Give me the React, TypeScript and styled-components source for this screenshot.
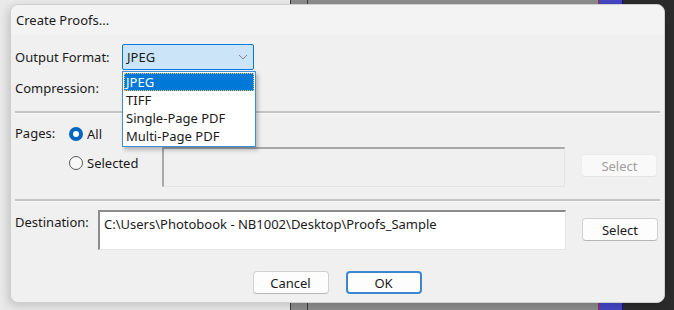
import React from 'react';
import styled, { createGlobalStyle } from 'styled-components';

const GlobalStyle = createGlobalStyle`
  html, body {
    margin: 0;
    padding: 0;
  }
  body {
    font-family: 'Noto Sans', 'Open Sans', sans-serif;
    font-size: 13px;
    color: #1a1a1a;
  }
`;

const Desktop = styled.div`
  width: 674px;
  height: 310px;
  box-sizing: border-box;
  padding: 4px 9px 7px 10px;
  overflow: hidden;
  background: linear-gradient(
    to right,
    #e9e9e9 0,
    #e9e9e9 290px,
    #3a3a3a 290px,
    #3a3a3a 291px,
    #8d8d8d 291px,
    #8d8d8d 307px,
    #3a3a3a 307px,
    #3a3a3a 308px,
    #8d8d8d 308px,
    #8d8d8d 598px,
    #c02020 598px,
    #c02020 599px,
    #4646c4 599px,
    #4646c4 622px,
    #1010a0 622px,
    #1010a0 623px,
    #2b2b2b 623px
  );
`;

const Dialog = styled.div`
  height: 100%;
  box-sizing: border-box;
  background: #f0f0f0;
  border: 1px solid #cfcfcf;
  border-radius: 8px;
  box-shadow: -2px 3px 8px rgba(0, 0, 0, 0.16);
  display: flex;
  flex-direction: column;
`;

const TitleBar = styled.div`
  height: 30px;
  padding: 0 5px;
  display: flex;
  align-items: center;
  background: #f3f3f3;
  border-radius: 8px 8px 0 0;
`;

const Body = styled.div`
  flex: 1;
  padding: 9px 6px 0 4px;
  display: flex;
  flex-direction: column;
`;

const Row = styled.div<{ $top?: number; $height?: number }>`
  display: flex;
  align-items: flex-start;
  margin-top: ${(p) => p.$top ?? 0}px;
  ${(p) => (p.$height ? `height: ${p.$height}px; align-items: center;` : '')}
`;

const Label = styled.div<{ $width?: number; $top?: number }>`
  width: ${(p) => (p.$width ? `${p.$width}px` : 'auto')};
  margin-top: ${(p) => p.$top ?? 0}px;
  flex-shrink: 0;
`;

const SelectWrap = styled.div`
  position: relative;
`;

const SelectBox = styled.div`
  width: 132px;
  height: 26px;
  box-sizing: border-box;
  border: 1px solid #0078d7;
  border-radius: 2px;
  background: #cce4f7;
  display: flex;
  align-items: center;
  justify-content: space-between;
  padding: 0 5px 0 4px;
`;

const DropList = styled.div`
  position: absolute;
  top: 27px;
  left: 0;
  width: 134px;
  box-sizing: border-box;
  background: #fff;
  border: 1px solid #3c8fd8;
  box-shadow: 2px 3px 4px rgba(0, 0, 0, 0.25);
  padding: 1px;
  z-index: 5;
`;

const DropItem = styled.div<{ $active?: boolean }>`
  height: 18px;
  line-height: 18px;
  padding: 0 2px;
  box-sizing: border-box;
  background: ${(p) => (p.$active ? '#0078d7' : 'transparent')};
  color: ${(p) => (p.$active ? '#fff' : '#1a1a1a')};
  outline: ${(p) => (p.$active ? '1px dotted #e8c070' : 'none')};
  outline-offset: -1px;
`;

const Separator = styled.div<{ $top: number }>`
  height: 2px;
  margin-top: ${(p) => p.$top}px;
  margin-right: -2px;
  background: #c4c4c4;
  border-bottom: 1px solid #f8f8f8;
`;

const RadioGroup = styled.div`
  display: flex;
  flex-direction: column;
  gap: 7px;
`;

const RadioRow = styled.label`
  display: flex;
  align-items: center;
  gap: 4px;
  height: 22px;
`;

const RadioDot = styled.span<{ $checked?: boolean }>`
  width: 14px;
  height: 14px;
  box-sizing: border-box;
  border-radius: 50%;
  border: ${(p) => (p.$checked ? '4px solid #0067c0' : '1px solid #5a5a5a')};
  background: ${(p) => (p.$checked ? '#fff' : '#f7f7f7')};
`;

const TextArea = styled.div<{ $disabled?: boolean; $width: number; $left?: number; $top?: number }>`
  width: ${(p) => p.$width}px;
  height: 40px;
  margin-left: ${(p) => p.$left ?? 0}px;
  margin-top: ${(p) => p.$top ?? 0}px;
  box-sizing: border-box;
  border-top: 2px solid ${(p) => (p.$disabled ? '#a8a8a8' : '#8c8c8c')};
  border-left: 2px solid ${(p) => (p.$disabled ? '#a8a8a8' : '#8c8c8c')};
  border-right: 1px solid #e4e4e4;
  border-bottom: 1px solid #e4e4e4;
  background: ${(p) => (p.$disabled ? '#f0f0f0' : '#ffffff')};
  padding: 3px 4px;
`;

const Button = styled.div<{ $disabled?: boolean; $default?: boolean; $left?: number; $top?: number }>`
  width: 76px;
  height: 23px;
  margin-left: ${(p) => p.$left ?? 0}px;
  margin-top: ${(p) => p.$top ?? 0}px;
  box-sizing: border-box;
  display: flex;
  align-items: center;
  justify-content: center;
  border-radius: 4px;
  background: ${(p) => (p.$disabled ? '#f9f9f9' : '#fdfdfd')};
  color: ${(p) => (p.$disabled ? '#a0a0a0' : '#1a1a1a')};
  border: ${(p) =>
    p.$default ? '2px solid #3a86cf' : p.$disabled ? '1px solid #ececec' : '1px solid #d0d0d0'};
  border-bottom-color: ${(p) => (p.$default ? '#3a86cf' : p.$disabled ? '#e4e4e4' : '#b8b8b8')};
`;

const Footer = styled.div`
  display: flex;
  justify-content: center;
  gap: 17px;
  margin-top: 21px;
  padding-left: 1px;
`;

const Chevron = () => (
  <svg width="10" height="6" viewBox="0 0 10 6">
    <path d="M1 1 L5 5 L9 1" fill="none" stroke="#808080" strokeWidth="1" />
  </svg>
);

const formats = ['JPEG', 'TIFF', 'Single-Page PDF', 'Multi-Page PDF'];

export default function App() {
  return (
    <Desktop>
      <GlobalStyle />
      <Dialog>
        <TitleBar>Create Proofs...</TitleBar>
        <Body>
          <Row>
            <Label $width={107} $top={4}>
              Output Format:
            </Label>
            <SelectWrap>
              <SelectBox>
                <span>JPEG</span>
                <Chevron />
              </SelectBox>
              <DropList>
                {formats.map((f, i) => (
                  <DropItem key={f} $active={i === 0}>
                    {f}
                  </DropItem>
                ))}
              </DropList>
            </SelectWrap>
          </Row>
          <Row $height={35}>
            <Label>Compression:</Label>
          </Row>
          <Separator $top={6} />
          <Row $top={9}>
            <Label $width={54} $top={1}>
              Pages:
            </Label>
            <RadioGroup>
              <RadioRow>
                <RadioDot $checked />
                All
              </RadioRow>
              <RadioRow>
                <RadioDot />
                Selected
              </RadioRow>
            </RadioGroup>
            <TextArea $disabled $width={403} $left={24} $top={24} />
            <Button $disabled $left={16} $top={31}>
              Select
            </Button>
          </Row>
          <Separator $top={12} />
          <Row $top={8}>
            <Label $width={83} $top={3}>
              Destination:
            </Label>
            <TextArea $width={468}>
              C:\Users\Photobook - NB1002\Desktop\Proofs_Sample
            </TextArea>
            <Button $left={16} $top={8}>
              Select
            </Button>
          </Row>
          <Footer>
            <Button>Cancel</Button>
            <Button $default>OK</Button>
          </Footer>
        </Body>
      </Dialog>
    </Desktop>
  );
}
